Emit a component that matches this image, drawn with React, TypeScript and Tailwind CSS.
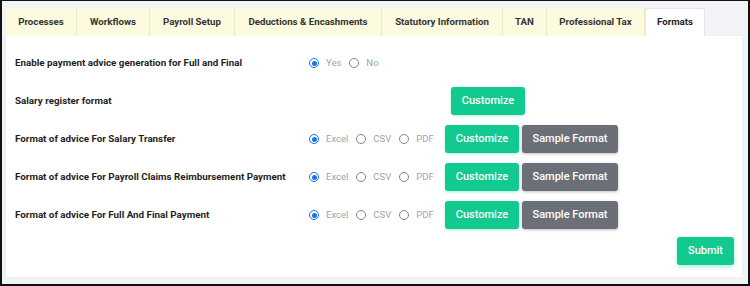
import { useState } from "react";

const tabs = [
  { name: "Processes", w: 71 },
  { name: "Workflows", w: 73 },
  { name: "Payroll Setup", w: 85 },
  { name: "Deductions & Encashments", w: 147 },
  { name: "Statutory Information", w: 121 },
  { name: "TAN", w: 44 },
  { name: "Professional Tax", w: 98 },
  { name: "Formats", w: 60 },
];

function Radio({ checked, label }: { checked: boolean; label: string }) {
  return (
    <label className="flex items-center gap-[7px] cursor-pointer">
      {checked ? (
        <span className="w-[10px] h-[10px] rounded-full border-[1.5px] border-[#1a73e8] bg-white flex items-center justify-center">
          <span className="w-[5px] h-[5px] rounded-full bg-[#1a73e8]" />
        </span>
      ) : (
        <span className="w-[10px] h-[10px] rounded-full border border-[#858585] bg-white" />
      )}
      <span className="text-[9.5px] text-[#a3a3a3]">{label}</span>
    </label>
  );
}

function GreenBtn({ children }: { children: string }) {
  return (
    <button className="h-[28px] w-[74px] rounded-[3px] bg-[#12c98f] text-white text-[11px] font-medium shadow-[0_1px_3px_rgba(18,201,143,0.35)]">
      {children}
    </button>
  );
}

function GrayBtn({ children }: { children: string }) {
  return (
    <button className="h-[28px] w-[96px] rounded-[3px] bg-[#6b7078] text-white text-[11px] font-medium shadow-[0_1px_3px_rgba(0,0,0,0.25)]">
      {children}
    </button>
  );
}

function FormatRow({ label }: { label: string }) {
  return (
    <div className="h-[38px] flex items-center">
      <div className="w-[294px] shrink-0 text-[9.8px] font-bold text-[#1f1f1f]">{label}</div>
      <div className="flex items-center gap-[8px] w-[136px]">
        <Radio checked label="Excel" />
        <Radio checked={false} label="CSV" />
        <Radio checked={false} label="PDF" />
      </div>
      <div className="flex items-center gap-[3px]">
        <GreenBtn>Customize</GreenBtn>
        <GrayBtn>Sample Format</GrayBtn>
      </div>
    </div>
  );
}

export default function App() {
  const [active] = useState("Formats");

  return (
    <div
      className="w-[750px] h-[286px] bg-[#f2f3f7] border-x-2 border-b-2 border-t border-[#111] box-border pl-[4px] pr-[6px] pt-[7px]"
      style={{ fontFamily: "Roboto, 'Liberation Sans', sans-serif" }}
    >
      <div className="flex h-[28px]">
        {tabs.map((t) => (
          <div
            key={t.name}
            style={{ width: t.w }}
            className={
              t.name === active
                ? "h-[28px] flex items-center justify-center bg-white border border-b-0 border-[#e3e5ea] rounded-t-[3px] text-[9.7px] font-bold text-[#222]"
                : "h-[28px] flex items-center justify-center bg-[#fcfbdf] border-r border-[#ecebc8] text-[9.7px] font-bold text-[#333]"
            }
          >
            {t.name}
          </div>
        ))}
      </div>
      <div className="bg-white h-[241px] pl-[9px] pr-[8px] pt-[8px] shadow-[0_0_2px_rgba(0,0,0,0.06)]">
        <div className="h-[38px] flex items-center">
          <div className="w-[294px] shrink-0 text-[9.8px] font-bold text-[#1f1f1f]">
            Enable payment advice generation for Full and Final
          </div>
          <div className="flex items-center gap-[8px]">
            <Radio checked label="Yes" />
            <Radio checked={false} label="No" />
          </div>
        </div>
        <div className="h-[38px] flex items-center">
          <div className="w-[436px] shrink-0 text-[9.8px] font-bold text-[#1f1f1f]">Salary register format</div>
          <GreenBtn>Customize</GreenBtn>
        </div>
        <FormatRow label="Format of advice For Salary Transfer" />
        <FormatRow label="Format of advice For Payroll Claims Reimbursement Payment" />
        <FormatRow label="Format of advice For Full And Final Payment" />
        <div className="flex justify-end mt-[3px]">
          <button className="h-[28px] w-[57px] rounded-[3px] bg-[#12c98f] text-white text-[11px] font-medium shadow-[0_2px_4px_rgba(18,201,143,0.35)]">
            Submit
          </button>
        </div>
      </div>
    </div>
  );
}
